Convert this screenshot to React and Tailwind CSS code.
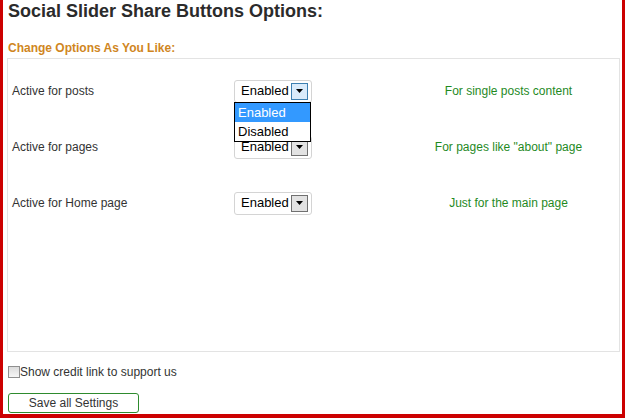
const rows = [
  { label: 'Active for posts', value: 'Enabled', hint: 'For single posts content', open: true },
  { label: 'Active for pages', value: 'Enabled', hint: 'For pages like "about" page' },
  { label: 'Active for Home page', value: 'Enabled', hint: 'Just for the main page' },
];

const ArrowBox = ({ active }) => (
  <span
    className={`flex h-[17px] w-[17px] items-center justify-center border ${
      active ? 'border-[#3c7fb1] bg-[#d9ebfb]' : 'border-[#707070] bg-[#e2e2e2]'
    }`}
  >
    <svg width="7" height="4" viewBox="0 0 7 4">
      <path d="M0 0h7L3.5 4z" fill="#000" />
    </svg>
  </span>
);

const FakeSelect = ({ value, open }) => (
  <div className="relative">
    <div className="flex h-[23px] w-[78px] items-center justify-between rounded-[3px] border border-[#d4d4d4] bg-white pl-[6px] pr-[3px] text-[13px] text-black">
      <span>{value}</span>
      <ArrowBox active={open} />
    </div>
    {open && (
      <div className="absolute left-0 top-[22px] z-10 w-[77px] border border-black bg-white text-[13px]">
        <div className="h-[19px] bg-[#3399ff] pl-[3px] leading-[19px] text-white">Enabled</div>
        <div className="h-[19px] pl-[3px] leading-[19px] text-black">Disabled</div>
      </div>
    )}
  </div>
);

export default function App() {
  return (
    <div className="h-[418px] w-[625px] bg-white font-['Liberation_Sans',Arial,sans-serif]">
      <div className="flex h-full flex-col border-x-[3px] border-b-4 border-[#cc0000]">
        <h1 className="pl-[5px] text-[18px] font-bold leading-[22px] text-[#2b2b2b]">
          Social Slider Share Buttons Options:
        </h1>
        <h3 className="mt-[18px] pl-[5px] text-[12px] font-bold leading-4 text-[#d0861e]">
          Change Options As You Like:
        </h3>

        <div className="ml-1 mr-[2px] mt-[2px] h-[294px] border border-[#e3e3e3] pl-1 pt-1">
          {rows.map((row) => (
            <div key={row.label} className="flex h-[56px] items-center text-[12px]">
              <div className="w-[222px] text-[#333]">{row.label}</div>
              <div className="w-[164px]">
                <FakeSelect value={row.value} open={row.open} />
              </div>
              <div className="flex-1 text-center text-[#1f8a1f]">{row.hint}</div>
            </div>
          ))}
        </div>

        <label className="mt-[10px] flex h-5 items-center pl-[5px] text-[12px] text-[#333]">
          <span className="h-[12px] w-[12px] border border-[#8f8f8f] bg-gradient-to-b from-[#dcdcdc] to-[#f6f6f6]" />
          <span>Show credit link to support us</span>
        </label>

        <div className="mt-auto pl-[5px]">
          <button className="h-[20px] w-[131px] rounded-[3px] border border-[#2e8b2e] bg-white text-[12px] text-[#333]">
            Save all Settings
          </button>
        </div>
      </div>
    </div>
  );
}
